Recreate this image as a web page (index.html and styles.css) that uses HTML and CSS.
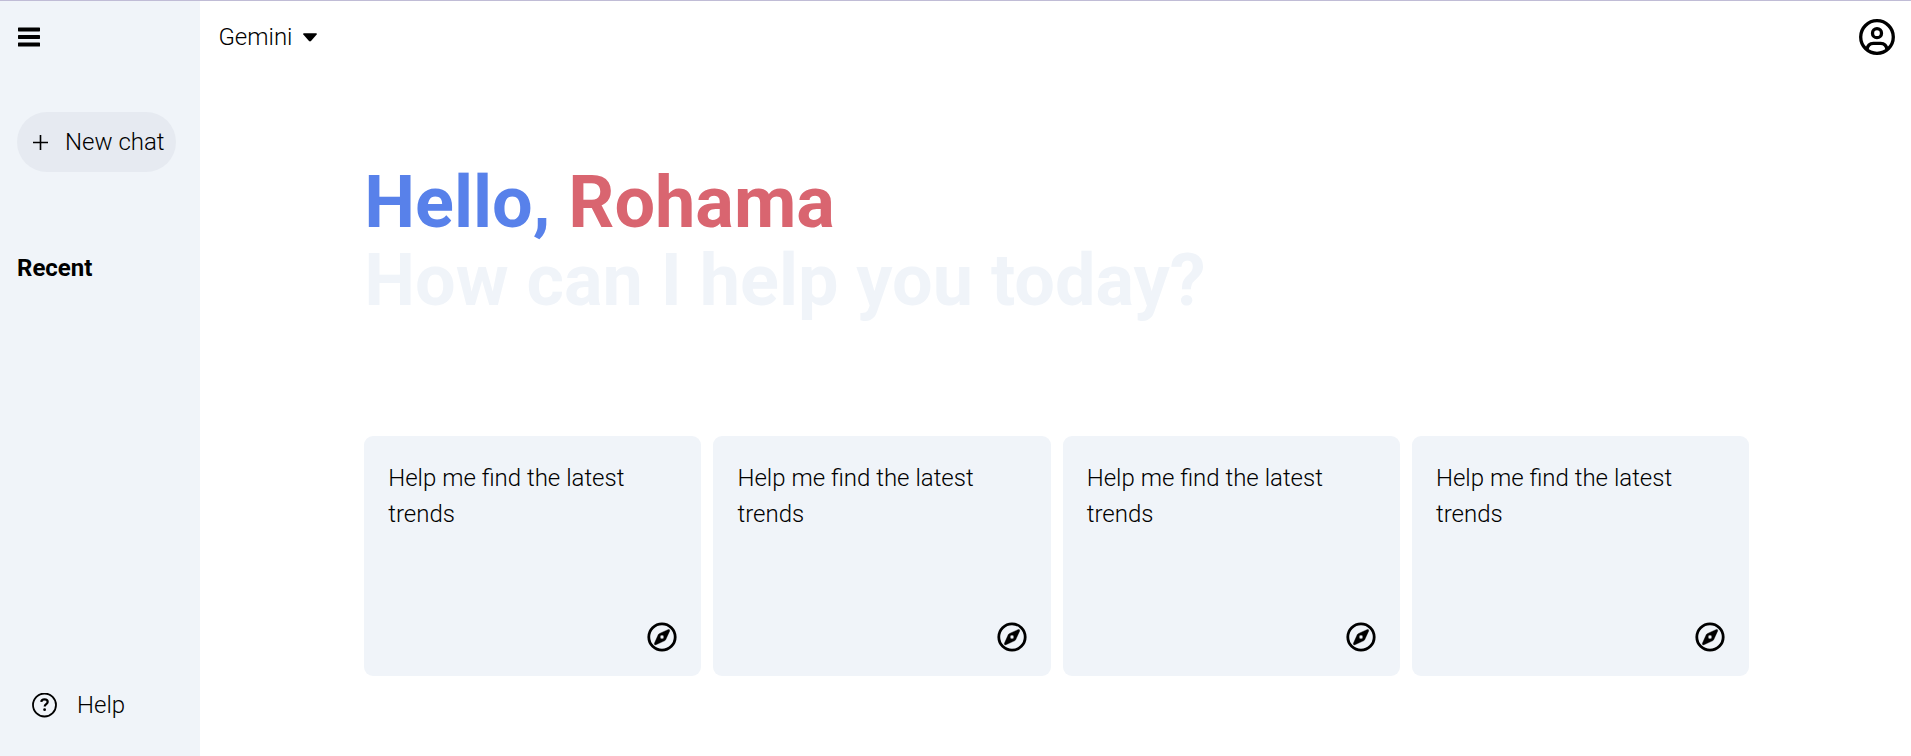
FILE: index.html
```html
<!DOCTYPE html>
<html lang="en">
<head>
<meta charset="utf-8">
<title>Gemini</title>
<link rel="stylesheet" href="styles.css">
</head>
<body>
<svg width="0" height="0" class="defs" aria-hidden="true">
  <symbol id="compass" viewBox="0 0 30 30">
    <circle cx="15" cy="15" r="13.200" fill="none" stroke="#000" stroke-width="2.800"/>
    <path fill-rule="evenodd" stroke="#000" stroke-width=".4" d="M21.400 7.500 12.700 11.400Q11.600 11.900 11.200 12.800L7.300 21.600Q7.200 23.200 8.900 22.800L17.500 18.800Q18.400 18.400 18.800 17.400L22.700 8.900Q22.900 7.200 21.400 7.500zM15 13.100a1.900 1.900 0 1 1 0 3.800 1.900 1.900 0 1 1 0-3.800z"/>
  </symbol>
</svg>
<div class="app">
  <aside class="sidebar">
    <svg class="menu" viewBox="0 0 22 20"><rect y=".4" width="22" height="4" rx=".6"/><rect y="7.900" width="22" height="4" rx=".6"/><rect y="15.500" width="22" height="4" rx=".6"/></svg>
    <button class="new-chat">
      <svg class="plus" viewBox="0 0 15 15"><path d="M7.500 0v15M0 7.500h15"/></svg>
      <span>New chat</span>
    </button>
    <h2 class="recent">Recent</h2>
    <div class="help">
      <svg class="help-icon" viewBox="0 0 25 25"><circle cx="12.500" cy="12" r="11.500"/><path class="hook" d="M9.300 8.900c.1-1.700 1.300-2.500 3.200-2.500s3.200 1 3.200 2.500c0 2.200-3 2.200-3 4.600"/><circle class="dot" cx="12.600" cy="16.700" r="1.400"/></svg>
      <span>Help</span>
    </div>
  </aside>
  <main class="main">
    <header class="topbar">
      <div class="brand"><span>Gemini</span><svg class="caret" viewBox="0 0 14 9"><path d="M.8.300h12.400q1.200.4.300 1.500L8 8.100q-1 .9-2 0L.5 1.800Q-.4.700.8.300z"/></svg></div>
      <svg class="user" viewBox="0 0 36 36"><circle cx="18" cy="18" r="16.300"/><circle cx="18" cy="14.200" r="4.500"/><path d="M8 30.500c.5-4 3.200-6.200 6.400-6.200h7.200c3.200 0 5.900 2.200 6.400 6.200"/></svg>
    </header>
    <section class="content">
      <div class="greet">
        <p><span class="hello">Hello,</span> <span class="name">Rohama</span></p>
        <p>How can I help you today?</p>
      </div>
      <div class="cards">
        <div class="card"><p>Help me find the latest trends</p><svg class="compass"><use href="#compass"/></svg></div>
        <div class="card"><p>Help me find the latest trends</p><svg class="compass"><use href="#compass"/></svg></div>
        <div class="card"><p>Help me find the latest trends</p><svg class="compass"><use href="#compass"/></svg></div>
        <div class="card"><p>Help me find the latest trends</p><svg class="compass"><use href="#compass"/></svg></div>
      </div>
    </section>
  </main>
</div>
</body>
</html>
```
FILE: styles.css
```css
* { box-sizing: border-box; margin: 0; padding: 0; }
body {
  background: #fff;
  color: #000;
  font: 300 24px/36px Roboto, sans-serif;
  overflow: hidden;
}
svg { display: block; flex: none; }
.defs { display: none; }
.app { display: flex; height: 756px; border-top: 1px solid #c0bcd6; }
.sidebar {
  display: flex;
  flex-direction: column;
  align-items: flex-start;
  width: 200px;
  padding: 26px 17px 33px;
  background: #f0f4f9;
}
.menu { width: 22px; height: 20px; margin-left: 1px; }
.new-chat {
  display: flex;
  align-items: center;
  gap: 17px;
  width: 159px;
  height: 60px;
  margin-top: 65px;
  padding-left: 16px;
  border: 0;
  border-radius: 30px;
  background: #e6eaf1;
  color: inherit;
  font: inherit;
  white-space: nowrap;
}
.plus { width: 15px; height: 15px; fill: none; stroke: #000; stroke-width: 1.6; }
.recent { margin-top: 78px; font-size: 24px; font-weight: 700; }
.help { display: flex; align-items: center; gap: 20.5px; margin-top: auto; padding-left: 14.5px; }
.help-icon { width: 25px; height: 25px; fill: none; stroke: #000; stroke-width: 1.8; }
.help-icon .hook { stroke-width: 2.200; }
.help-icon .dot { fill: #000; stroke: none; }
.main { flex: 1; }
.topbar {
  display: flex;
  justify-content: space-between;
  align-items: center;
  height: 72px;
  padding: 0 16px 0 18.400px;
}
.brand { display: flex; align-items: center; gap: 11px; }
.caret { width: 14px; height: 9px; }
.user { width: 36px; height: 36px; fill: none; stroke: #000; stroke-width: 3.300; }
.content { width: 1385px; margin: 91px 0 0 164.200px; }
.greet { color: #f0f4f9; font-size: 72px; font-weight: 700; line-height: 78px; }
.hello { color: #5881ea; }
.name { color: #d96570; }
.cards { display: grid; grid-template-columns: repeat(4, 1fr); gap: 12px; margin-top: 116px; }
.card {
  display: flex;
  flex-direction: column;
  justify-content: space-between;
  height: 240px;
  padding: 24px;
  border-radius: 9px;
  background: #f0f4f9;
}
.compass { width: 30px; height: 30px; align-self: flex-end; }
```
